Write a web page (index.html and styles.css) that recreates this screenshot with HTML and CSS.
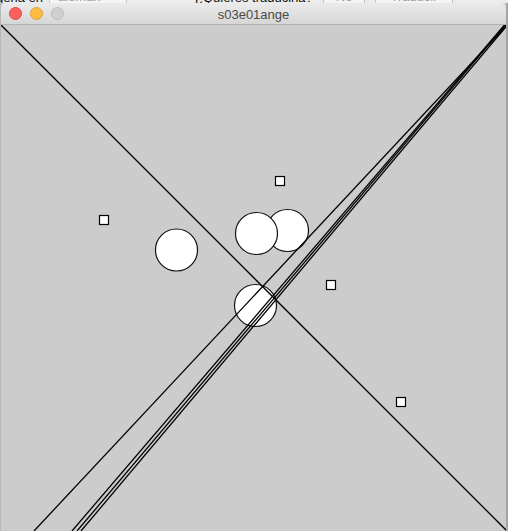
FILE: index.html
```html
<!DOCTYPE html>
<html>
<head>
<meta charset="utf-8">
<link rel="stylesheet" href="styles.css">
</head>
<body>
<div class="strip">
  <div class="strip-inner">
    <span class="t1">gerla en</span>
    <span class="btn b1">alemán</span>
    <span class="t2">¿Quieres traducirla?</span>
    <span class="btn b2">No</span>
    <span class="btn b3">Traducir</span>
  </div>
</div>
<div class="window">
  <div class="titlebar">
    <div class="lights">
      <span class="light red"></span>
      <span class="light yellow"></span>
      <span class="light gray"></span>
    </div>
    <div class="title">s03e01ange</div>
    <div></div>
  </div>
  <div class="canvas">
    <svg class="sketch" width="505" height="506" viewBox="1 25 505 506">
      <rect x="0" y="0" width="520" height="540" fill="#cccccc"/>
      <g fill="#fff" stroke="#111" stroke-width="1.2">
        <circle cx="176.5" cy="250" r="21"/>
        <circle cx="287.5" cy="230.5" r="21"/>
        <circle cx="256.5" cy="233.5" r="21"/>
        <circle cx="255.5" cy="305.5" r="21"/>
      </g>
      <g stroke="#000" stroke-width="1.3" fill="none">
        <line x1="0" y1="24" x2="507" y2="531"/>
        <line x1="34" y1="531" x2="510" y2="22"/>
        <line x1="72" y1="531" x2="507" y2="22"/>
        <line x1="77" y1="531" x2="508" y2="22"/>
        <line x1="81" y1="531" x2="510" y2="22"/>
      </g>
      <g fill="#fff" stroke="#000" stroke-width="1.2">
        <rect x="275.5" y="176.5" width="9" height="9"/>
        <rect x="99.5" y="215.5" width="9" height="9"/>
        <rect x="326.5" y="280.5" width="9" height="9"/>
        <rect x="396.5" y="397.5" width="9" height="9"/>
      </g>
    </svg>
  </div>
</div>
</body>
</html>
```

FILE: styles.css
```css
html, body {
  margin: 0;
  padding: 0;
}
body {
  width: 508px;
  height: 531px;
  overflow: hidden;
  background: #e6e6e6;
  font-family: "Liberation Sans", Arial, sans-serif;
}
.strip {
  height: 3px;
  overflow: hidden;
  background: #ececec;
}
.strip-inner {
  margin-top: -9px;
  height: 14px;
  display: flex;
  align-items: flex-end;
  font-size: 13px;
  line-height: 14px;
  white-space: nowrap;
  color: #111;
}
.strip-inner .t1 { margin-left: -4px; }
.strip-inner .btn {
  color: #a0a0a0;
  background: #f4f4f4;
  border: 1px solid #c8c8c8;
  padding: 0 8px;
}
.strip-inner .b1 { margin-left: 6px; width: 60px; }
.strip-inner .t2 { margin-left: 68px; }
.strip-inner .b2 { margin-left: 10px; padding: 0 12px; }
.strip-inner .b3 { margin-left: 10px; padding: 0 14px; }

.window {
  width: 505px;
  border-right: 2px solid #a4a4a4;
  border-left: 1px solid #b8b8b8;
  background: #cccccc;
}
.titlebar {
  height: 21px;
  border-top-left-radius: 5px;
  border-top-right-radius: 5px;
  background: linear-gradient(#ebebeb, #d6d6d6);
  border-bottom: 1px solid #b2b2b2;
  display: grid;
  grid-template-columns: 1fr auto 1fr;
  align-items: center;
}
.lights {
  display: flex;
  gap: 8px;
  padding-left: 8px;
  align-items: center;
}
.light {
  width: 11px;
  height: 11px;
  border-radius: 50%;
  display: block;
}
.red { background: #fc605c; border: 0.5px solid #de4a45; }
.yellow { background: #fdbc40; border: 0.5px solid #dea236; }
.gray { background: #d0d0d0; border: 0.5px solid #bdbdbd; }
.title {
  font-size: 13px;
  color: #4a4a4a;
  padding-top: 1px;
}
.canvas {
  height: 506px;
}
.sketch {
  display: block;
}
```
